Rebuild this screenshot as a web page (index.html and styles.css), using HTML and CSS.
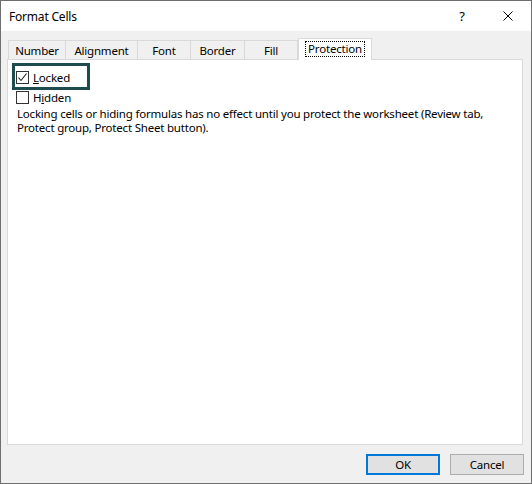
FILE: index.html
```html
<!DOCTYPE html>
<html>
<head>
<meta charset="utf-8">
<link rel="stylesheet" href="styles.css">
</head>
<body>
<div class="window">
  <div class="titlebar">
    <div class="title">Format Cells</div>
    <div class="ctrl help">?</div>
    <div class="ctrl close">
      <svg width="10" height="10" viewBox="0 0 10 10"><path d="M0.5 0.5 L9.5 9.5 M9.5 0.5 L0.5 9.5" stroke="#000" stroke-width="1" fill="none"/></svg>
    </div>
  </div>
  <div class="content">
    <div class="tabs">
      <div class="tab t-number">Number</div>
      <div class="tab t-align">Alignment</div>
      <div class="tab t-font">Font</div>
      <div class="tab t-border">Border</div>
      <div class="tab t-fill">Fill</div>
      <div class="tab selected"><span class="focus">Protection</span></div>
    </div>
    <div class="panel">
      <div class="highlight"></div>
      <div class="check-row">
        <svg class="box" width="13" height="13" viewBox="0 0 13 13"><rect x="0.5" y="0.5" width="12" height="12" fill="#fff" stroke="#333"/><path d="M2.5 6.5 L5 9.5 L10.5 2.5" stroke="#222" stroke-width="1.1" fill="none"/></svg>
        <span><u>L</u>ocked</span>
      </div>
      <div class="check-row">
        <svg class="box" width="13" height="13" viewBox="0 0 13 13"><rect x="0.5" y="0.5" width="12" height="12" fill="#fff" stroke="#333"/></svg>
        <span>H<u>i</u>dden</span>
      </div>
      <p class="desc">Locking cells or hiding formulas has no effect until you protect the worksheet (Review tab,<br>Protect group, Protect Sheet button).</p>
    </div>
    <div class="buttons">
      <div class="btn default">OK</div>
      <div class="btn">Cancel</div>
    </div>
  </div>
</div>
</body>
</html>
```
FILE: styles.css
```css
* { box-sizing: border-box; }
html, body { margin: 0; padding: 0; }
body {
  font-family: "Noto Sans", "Open Sans", sans-serif;
  font-size: 11.5px;
  letter-spacing: -0.2px;
  color: #000;
  background: #f0f0f0;
}
.window {
  width: 532px;
  height: 484px;
  border: 1px solid #6f6f6f;
  display: flex;
  flex-direction: column;
  background: #f0f0f0;
}
.titlebar {
  height: 30px;
  background: #fff;
  display: flex;
  align-items: center;
  flex: none;
}
.title {
  padding-left: 8px;
  flex: 1;
  font-size: 12px;
}
.ctrl {
  width: 46px;
  height: 30px;
  display: flex;
  align-items: center;
  justify-content: center;
}
.help { font-size: 13px; }
.content {
  flex: 1;
  display: flex;
  flex-direction: column;
  padding: 7px 7px 8px 6px;
}
.tabs {
  display: flex;
  align-items: flex-end;
  height: 21px;
  padding-left: 1px;
  flex: none;
}
.tab {
  height: 19px;
  border-top: 1px solid #d9d9d9;
  border-left: 1px solid #d9d9d9;
  display: flex;
  align-items: center;
  justify-content: center;
  line-height: 14px;
  padding-top: 1px;
}
.t-number { width: 57px; }
.t-align { width: 72px; }
.t-font { width: 53px; }
.t-border { width: 54px; }
.t-fill { width: 54px; border-right: 1px solid #d9d9d9; }
.tab.selected {
  width: 74px;
  height: 22px;
  margin-bottom: -1px;
  background: #fff;
  border: 1px solid #d9d9d9;
  border-bottom: none;
  position: relative;
  z-index: 1;
  padding-top: 0;
  padding-bottom: 2px;
}
.focus {
  outline: 1px dotted #000;
  padding: 0 2px;
  line-height: 14px;
}
.panel {
  flex: 1;
  margin-right: 1px;
  background: #fff;
  border: 1px solid #d9d9d9;
  padding: 7px 8px;
  position: relative;
}
.highlight {
  position: absolute;
  left: 4px;
  top: 3px;
  width: 78px;
  height: 27px;
  border: 3px solid #1d4b4e;
}
.check-row {
  display: flex;
  align-items: center;
  gap: 4px;
  height: 20px;
}
.box { flex: none; }
.desc {
  margin: 0;
  padding-left: 1px;
  line-height: 14px;
  white-space: nowrap;
}
.buttons {
  display: flex;
  justify-content: flex-end;
  gap: 10px;
  margin-top: 9px;
  flex: none;
}
.btn {
  width: 74px;
  height: 21px;
  background: #e1e1e1;
  border: 1px solid #adadad;
  display: flex;
  align-items: center;
  justify-content: center;
}
.btn.default {
  border: 2px solid #0078d7;
}
```
